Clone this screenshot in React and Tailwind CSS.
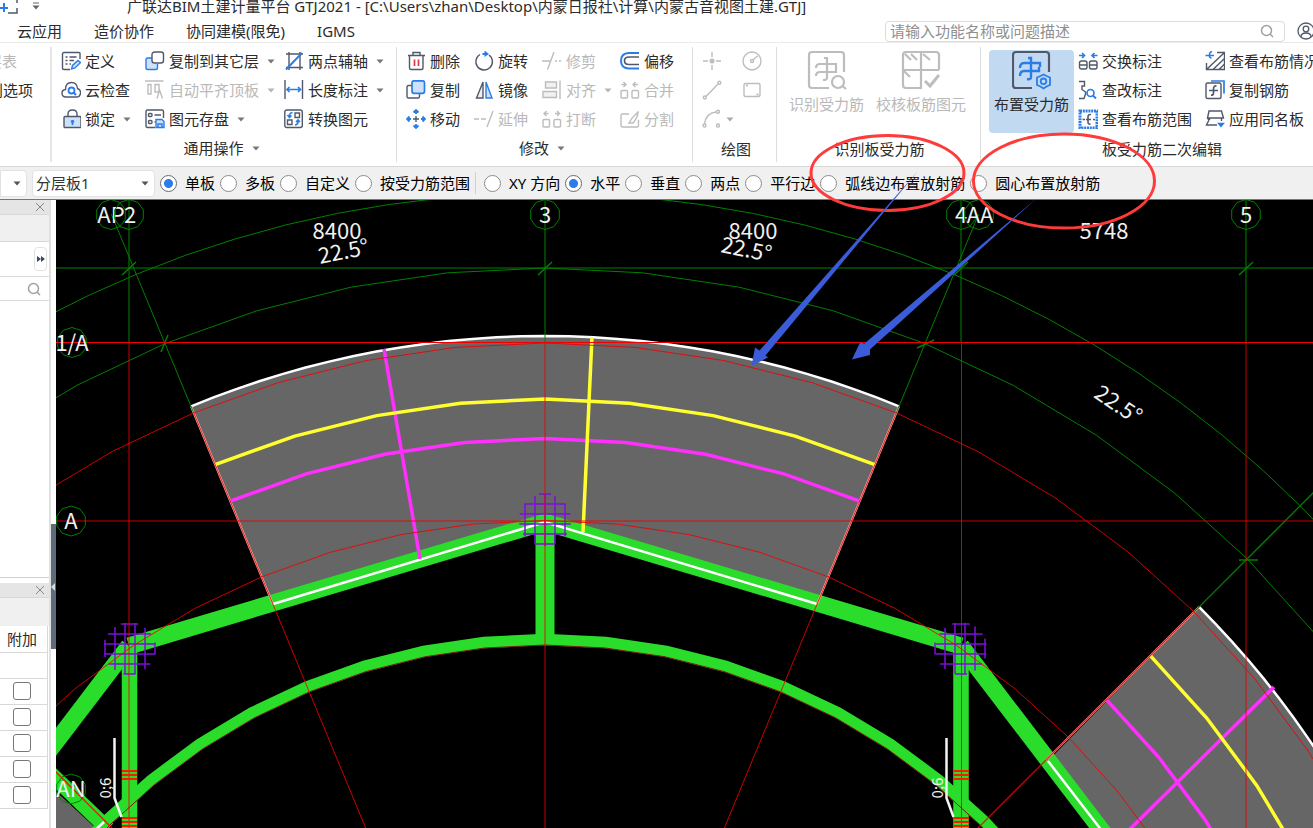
import React, { useState } from "react";

const DARK = "#50586a";
const BLUE = "#2a7de8";
const PALE = "#cfe1f8";
const GREY = "#bdbdbd";

function Svg({ children, color = DARK }) {
  return (
    <svg viewBox="0 0 20 20" className="size-5 shrink-0" fill="none" stroke={color} strokeWidth="1.4" aria-hidden="true">
      {children}
    </svg>
  );
}

const icons = {
  define: (
    <Svg>
      <path d="M19 8V2.5Q19 1.5 18 1.5H3Q1.5 1.5 1.5 3V17Q1.5 18.5 3 18.5H9" />
      <path d="M4.5 6H6.500M8.500 6H15.500M4.500 9.500H6.500M8.500 9.500H13M4.500 13H6.500M8.500 13H10" />
      <path d="M10.500 18L11.500 14.500L17 9.500L19.500 11.500L14 17Z" stroke={BLUE} fill={PALE} />
    </Svg>
  ),
  cloud: (
    <Svg>
      <path d="M5 17Q1 17 1 13Q1 10 4.500 9.500Q4.500 2.500 10.500 2.500Q16 2.500 16.500 8.500Q20 10 19.500 13Q19 17 15.500 17Z" />
      <circle cx="10.500" cy="10.500" r="3" stroke={BLUE} strokeWidth="1.800" />
      <path d="M12.800 12.800L15 15" stroke={BLUE} strokeWidth="2" />
    </Svg>
  ),
  lock: (
    <Svg>
      <path d="M7 8V5Q7 1 11.500 1Q16 1 16 5V8" />
      <rect x="3" y="7.500" width="17" height="11" rx="1" fill={PALE} />
      <path d="M11.500 11V16M9.800 12.500H13.200" stroke={BLUE} strokeWidth="1.800" />
    </Svg>
  ),
  copyFloor: (
    <Svg>
      <path d="M7 7H2.500Q1 7 1 8.500V17Q1 18.500 2.500 18.500H11Q12.500 18.500 12.500 17V13" fill={PALE} stroke={BLUE} />
      <rect x="7" y="1" width="11.500" height="11" rx="2.500" fill="white" />
    </Svg>
  ),
  alignTop: (
    <Svg color={GREY}>
      <path d="M0 1H18.500M3 4.500H6V14H3ZM10 4.500H14V12H10ZM12 18.500L14.500 10L17.500 18.500" />
    </Svg>
  ),
  store: (
    <Svg>
      <path d="M10 18.500H2.500Q1 18.500 1 17V2.500Q1 1 2.500 1H17Q18.500 1 18.500 2.500V9" />
      <rect x="3.500" y="4.500" width="3.500" height="3" rx="1" />
      <rect x="3.500" y="11.500" width="3.500" height="3" rx="1" />
      <path d="M9.500 6H16M9.500 13H10.500" />
      <path d="M11 10.500H17L19 12.500V18.500H11ZM13 18V15H17V18" stroke={BLUE} fill={PALE} />
    </Svg>
  ),
  axis: (
    <Svg>
      <path d="M5 1V19M16 1V19M2 3H19M2 16.500H19" />
      <path d="M2 18.500L18 2" stroke={BLUE} strokeWidth="2" />
    </Svg>
  ),
  length: (
    <Svg>
      <path d="M1 0V19M18.500 0V19" />
      <path d="M3 9.500H16.500M5.500 7L3 9.500L5.500 12M14 7L16.500 9.500L14 12" stroke={BLUE} strokeWidth="1.700" />
    </Svg>
  ),
  convert: (
    <Svg>
      <rect x="0.800" y="1" width="17.500" height="17.500" rx="2" />
      <path d="M11 4H15.500V8.500H11ZM3.500 11H8V15.500H3.500Z" />
      <path d="M8.500 3.500Q5 4 5.500 8M3.500 6L5.500 8.500L7.500 6.500M11 16Q14.500 15.500 14 11.500M12 13L14 11L16 13" stroke={BLUE} strokeWidth="1.600" />
    </Svg>
  ),
  trash: (
    <Svg>
      <path d="M2 4.500H19M7 4V1.500H14V4M3.500 5V17Q3.500 18.500 5 18.500H15.500Q17 18.500 17 17V5" />
      <path d="M8.500 8.500V15M12.500 8.500V15" stroke="#e0383e" strokeWidth="1.700" />
    </Svg>
  ),
  copy: (
    <Svg>
      <path d="M6 5.500H2.500Q1 5.500 1 7V16.500Q1 18 2.500 18H12Q13.500 18 13.500 16.500V14" />
      <rect x="6" y="0.800" width="12.500" height="12.500" rx="2" fill={PALE} stroke={BLUE} strokeWidth="1.700" />
    </Svg>
  ),
  move: (
    <Svg color={BLUE}>
      <path d="M10 1V5M10 15V19M1 10H5M15 10H19M7.500 3.500L10 1L12.500 3.500M7.500 16.500L10 19L12.500 16.500M3.500 7.500L1 10L3.500 12.500M16.500 7.500L19 10L16.500 12.500" strokeWidth="1.800" />
      <path d="M10 7V13M7 10H13" stroke={DARK} />
    </Svg>
  ),
  rotate: (
    <Svg>
      <path d="M6 3.500A8.300 8.300 0 1 0 15 4" />
      <path d="M8.500 3H13" stroke={BLUE} strokeWidth="2" />
      <path d="M10.500 -0.500L15 3L10.500 6Z" fill={BLUE} stroke="none" />
    </Svg>
  ),
  mirror: (
    <Svg>
      <path d="M9 2V18H2.500Z" fill="#eef0f3" />
      <path d="M12 2V18H18Z" stroke={BLUE} fill={PALE} />
    </Svg>
  ),
  extend: (
    <Svg color={GREY}>
      <path d="M0 10H5M7 10H12M13 18L19 2" />
    </Svg>
  ),
  trim: (
    <Svg color={GREY}>
      <path d="M0 10H9M5.500 18.500L12 1M13 10H15M17 10H19" />
    </Svg>
  ),
  align: (
    <Svg color={GREY}>
      <path d="M18 0.500V19M3.500 2H14.500V8H3.500ZM1 11.500H14.500V17.500H1Z" fill="#f1f1f1" />
    </Svg>
  ),
  breakUp: (
    <Svg color={GREY}>
      <rect x="1" y="10.500" width="6.500" height="7.500" rx="1" />
      <rect x="12" y="10.500" width="6.500" height="7.500" rx="1" />
      <path d="M2 4.500H6.500M4.500 2L2 4.500L4.500 7M13 4.500H17.500M15 2L17.500 4.500L15 7" />
    </Svg>
  ),
  offset: (
    <Svg>
      <path d="M19 2H8.500Q1 2.500 1 9.800Q1 17 8.500 17.500H19" stroke={BLUE} strokeWidth="2" />
      <path d="M19 6H9Q4.500 6 4.500 9.800Q4.500 13.500 9 13.500H19" strokeWidth="1.700" />
    </Svg>
  ),
  merge: (
    <Svg color={GREY}>
      <rect x="1" y="10.500" width="6.500" height="7.500" rx="1" />
      <rect x="12" y="10.500" width="6.500" height="7.500" rx="1" />
      <path d="M1.500 4.500H6M3.500 2L6 4.500L3.500 7M13 4.500H18M15.500 2L13 4.500L15.500 7" />
    </Svg>
  ),
  split: (
    <Svg color={GREY}>
      <path d="M9 5H2.500Q1 5 1 6.500V16.500Q1 18 2.500 18H17Q18.500 18 18.500 16.500V11M9 14Q12 8 18 3Q18 8 13 14Z" />
    </Svg>
  ),
  point: (
    <Svg color={GREY}>
      <path d="M10 1V6M10 14V19M1 10H6M14 10H19" />
      <circle cx="10" cy="10" r="2.500" fill={GREY} stroke="none" />
    </Svg>
  ),
  circle: (
    <Svg color={GREY}>
      <circle cx="10" cy="10" r="9" />
      <circle cx="10" cy="10" r="1.500" />
      <path d="M11 9L15.500 5" />
    </Svg>
  ),
  line: (
    <Svg color={GREY}>
      <path d="M4 16.500L16 4" />
      <circle cx="2.800" cy="17.500" r="1.500" />
      <circle cx="17.300" cy="2.800" r="1.500" />
    </Svg>
  ),
  rect: (
    <Svg color={GREY}>
      <rect x="2" y="3.500" width="16" height="13" rx="1.500" />
      <path d="M4 5.500H6M14.500 14.500H16.500" strokeWidth="2" />
    </Svg>
  ),
  arc: (
    <Svg color={GREY}>
      <path d="M2.500 15Q4 4 14 3" />
      <circle cx="2.500" cy="16.500" r="1.500" />
      <circle cx="16" cy="2.800" r="1.500" />
      <circle cx="16" cy="16.500" r="1.500" />
    </Svg>
  ),
  swapMark: (
    <Svg>
      <rect x="1.500" y="10" width="7.500" height="8" rx="2" />
      <rect x="11.500" y="10" width="7.500" height="8" rx="2" />
      <path d="M1.500 14H9M11.500 14H19" />
      <path d="M1 4.500H6.500M4 2L6.500 4.500L4 7M14 4.500H19.500M16.500 2L14 4.500L16.500 7" stroke={BLUE} strokeWidth="1.700" />
    </Svg>
  ),
  editMark: (
    <Svg>
      <path d="M1 1.500H6.500V6L4 6V9.500L7.500 12V14L6 18.500H1M1 18.500H4" />
      <circle cx="12.500" cy="13" r="3.500" stroke={BLUE} strokeWidth="1.700" />
      <path d="M15 15.500L18 18.500" stroke={BLUE} strokeWidth="1.800" />
    </Svg>
  ),
  range: (
    <Svg color={BLUE}>
      <rect x="2" y="2" width="17" height="17" strokeWidth="3" strokeDasharray="2 0.800" />
      <path d="M13 5.500Q10 5 10 8V13Q10 15.500 12.500 15" stroke={DARK} strokeWidth="1.600" />
      <path d="M4.500 10.500H7M8 10.500H13M15 10.500H17" stroke={DARK} />
    </Svg>
  ),
  barState: (
    <Svg>
      <path d="M12 1.500H19.500V18.500H1.500V12M1.500 18.500L19.500 1.500M8 18.500L19.500 7.500M14 18.500L19.500 13" />
      <path d="M7 0.500Q4 1 4.500 5Q4.500 7 6.500 7M0.500 4.500H9" stroke={BLUE} strokeWidth="1.600" />
    </Svg>
  ),
  copyBar: (
    <Svg>
      <path d="M6 1H19V13.500" stroke={BLUE} strokeWidth="1.700" />
      <rect x="1" y="3" width="15" height="15.500" rx="1.500" />
      <path d="M11.500 6Q8.500 5.500 8.500 9V13Q8.500 15.500 6 15M4 10.500H13" strokeWidth="1.700" />
    </Svg>
  ),
  sameName: (
    <Svg>
      <path d="M4 2H16.500L18.500 9H2.500ZM2.500 9L4 11M4 11L1.500 16H12M4.500 9V11M16.500 9V12" />
      <path d="M13.500 14.500H18.500L16 17.500Z" stroke={BLUE} fill={BLUE} />
    </Svg>
  ),
};

function Caret({ className = "text-[#777]" }) {
  return (
    <svg viewBox="0 0 8 5" className={`w-2 shrink-0 ${className}`} aria-hidden="true">
      <path d="M0.500 0.500H7.500L4 4.500Z" fill="currentColor" />
    </svg>
  );
}

function Tool({ icon, label, disabled, caret }) {
  return (
    <button
      type="button"
      disabled={disabled}
      className="flex h-7 items-center gap-1 whitespace-nowrap text-[#2b2b2b] disabled:text-[#b9b9b9]"
    >
      {icons[icon]}
      <span>{label}</span>
      {caret && <Caret className={disabled ? "ml-1 text-[#b5b5b5]" : "ml-1 text-[#777]"} />}
    </button>
  );
}

function GroupLabel({ children, caret }) {
  if (caret) {
    return (
      <div className="mt-px flex h-7 items-center justify-center gap-2 pr-3.5 whitespace-nowrap">
        <span>{children}</span>
        <Caret />
      </div>
    );
  }
  return <div className="mt-1 flex h-6 items-center justify-center pr-1.5 whitespace-nowrap">{children}</div>;
}

const generalTools = [
  { icon: "define", label: "定义" },
  { icon: "copyFloor", label: "复制到其它层", caret: true },
  { icon: "axis", label: "两点辅轴", caret: true },
  { icon: "cloud", label: "云检查" },
  { icon: "alignTop", label: "自动平齐顶板", caret: true, disabled: true },
  { icon: "length", label: "长度标注", caret: true },
  { icon: "lock", label: "锁定", caret: true },
  { icon: "store", label: "图元存盘", caret: true },
  { icon: "convert", label: "转换图元" },
];

const modifyTools = [
  { icon: "trash", label: "删除" },
  { icon: "rotate", label: "旋转" },
  { icon: "trim", label: "修剪", disabled: true },
  { icon: "offset", label: "偏移" },
  { icon: "copy", label: "复制" },
  { icon: "mirror", label: "镜像" },
  { icon: "align", label: "对齐", disabled: true, caret: true },
  { icon: "merge", label: "合并", disabled: true },
  { icon: "move", label: "移动" },
  { icon: "extend", label: "延伸", disabled: true },
  { icon: "breakUp", label: "打断", disabled: true },
  { icon: "split", label: "分割", disabled: true },
];

const editTools = [
  { icon: "swapMark", label: "交换标注" },
  { icon: "barState", label: "查看布筋情况" },
  { icon: "editMark", label: "查改标注" },
  { icon: "copyBar", label: "复制钢筋" },
  { icon: "range", label: "查看布筋范围" },
  { icon: "sameName", label: "应用同名板" },
];

function TopBar() {
  return (
    <header>
      <div className="flex h-3 items-center leading-5">
        <div className="flex w-[127px] shrink-0 items-center">
          <svg viewBox="0 0 20 20" className="size-5 shrink-0" fill="none" stroke={DARK} strokeWidth="1.500" aria-hidden="true">
            <path d="M10 2H17V7M17 12V17H8" />
            <path d="M4 7V16M0 12H8" stroke={BLUE} strokeWidth="2" />
          </svg>
          <svg viewBox="0 0 8 8" className="ml-3 w-2 shrink-0" aria-hidden="true">
            <path d="M1 1H7" stroke="#666" />
            <path d="M0.500 3.500H7.500L4 7.500Z" fill="#666" />
          </svg>
        </div>
        <h1 className="whitespace-nowrap">
          {"广联达BIM土建计量平台 GTJ2021 - [C:\\Users\\zhan\\Desktop\\内蒙日报社\\计算\\内蒙古音视图土建.GTJ]"}
        </h1>
      </div>
      <div className="flex h-[30px] items-center pt-2">
        <nav className="flex gap-8 pl-[17px] whitespace-nowrap">
          <a href="#cloud">云应用</a>
          <a href="#cost">造价协作</a>
          <a href="#model">协同建模(限免)</a>
          <a href="#igms">IGMS</a>
        </nav>
        <div className="ml-auto flex h-[21px] w-[400px] items-center rounded-sm border border-[#dcdcdc] pr-2.5">
          <input
            aria-label="搜索功能"
            placeholder="请输入功能名称或问题描述"
            className="min-w-0 flex-1 pl-1 leading-5 outline-none placeholder:text-[#8f8f8f]"
          />
          <SearchIcon />
        </div>
        <button type="button" aria-label="账户" className="ml-3 w-4 shrink-0 overflow-hidden">
          <svg viewBox="0 0 18 18" className="size-[18px]" fill="none" stroke={DARK} strokeWidth="1.300">
            <circle cx="9" cy="9" r="8" />
            <circle cx="9" cy="7" r="2.800" />
            <path d="M4 15Q4 11 9 11Q14 11 14 15" />
          </svg>
        </button>
      </div>
    </header>
  );
}

function SearchIcon() {
  return (
    <svg viewBox="0 0 14 14" className="size-3.5 shrink-0" fill="none" stroke="#a0a0a0" strokeWidth="1.500" aria-hidden="true">
      <circle cx="6.500" cy="6.500" r="5" />
      <path d="M10 10L13 13" />
    </svg>
  );
}

function Ribbon() {
  return (
    <div className="flex overflow-hidden border-t border-[#ebebeb] py-1">
      <div className="flex w-[52px] shrink-0 flex-col gap-px border-r-2 border-[#e6e6e6] whitespace-nowrap">
        <button type="button" disabled className="flex h-7 w-[17px] items-center justify-end overflow-hidden text-[#b9b9b9]">
          <span>层表</span>
        </button>
        <button type="button" className="flex h-7 w-[33px] items-center justify-end overflow-hidden">
          <span>别选项</span>
        </button>
      </div>

      <div className="w-[345px] shrink-0 border-r border-[#dedede] pl-[9px]">
        <div className="grid grid-cols-[84px_139px_auto] gap-y-px">
          {generalTools.map((t) => <Tool key={t.label} {...t} />)}
        </div>
        <GroupLabel caret>通用操作</GroupLabel>
      </div>

      <div className="w-[296px] shrink-0 border-r border-[#dedede] pl-[9px]">
        <div className="grid grid-cols-[68px_68px_78px_auto] gap-y-px">
          {modifyTools.map((t) => <Tool key={t.label} {...t} />)}
        </div>
        <GroupLabel caret>修改</GroupLabel>
      </div>

      <div className="w-[84px] shrink-0 border-r border-[#dedede] pl-[9px]">
        <div className="grid grid-cols-[40px_auto] gap-y-px">
          {["point", "circle", "line", "rect", "arc"].map((name) => (
            <button key={name} type="button" disabled aria-label={name} className="flex h-7 items-center gap-1">
              {icons[name]}
              {name === "arc" && <Caret className="text-[#aaa]" />}
            </button>
          ))}
        </div>
        <GroupLabel>绘图</GroupLabel>
      </div>

      <div className="w-[204px] shrink-0 border-r border-[#dedede] pl-2">
        <div className="flex h-[86px] gap-3 pt-[3px] pl-1">
          <button type="button" disabled className="flex flex-col items-center gap-1 text-[#b9b9b9]">
            <svg viewBox="0 0 40 40" className="size-10" fill="none" stroke={GREY} strokeWidth="2.200" aria-hidden="true">
              <path d="M37 22V5Q37 2 34 2H5Q2 2 2 5V35Q2 38 5 38H22" />
              <path d="M17 8H20V28Q20 30 16 30M9 18Q9 14 13 14H29V18M9 26Q9 22 13 22H29V18" />
              <circle cx="31" cy="32" r="6" fill="white" />
              <path d="M35.500 36L39 39" />
            </svg>
            <span>识别受力筋</span>
          </button>
          <button type="button" disabled className="flex flex-col items-center gap-1 text-[#b9b9b9]">
            <svg viewBox="0 0 40 40" className="size-10" fill="none" stroke={GREY} strokeWidth="2.200" aria-hidden="true">
              <path d="M38 20V5Q38 2 35 2H5Q2 2 2 5V35Q2 38 5 38H20V2M2 20H38M4 4L10 10M10 4L16 10M22 4L29 10M3 21L9 27" />
              <path d="M24 31L29 36L38 25" strokeWidth="3" />
            </svg>
            <span>校核板筋图元</span>
          </button>
        </div>
        <GroupLabel>识别板受力筋</GroupLabel>
      </div>

      <div className="w-[360px] shrink-0 pl-2">
        <div className="flex h-[86px] gap-1">
          <button type="button" className="mt-[3px] flex h-[83px] w-[85px] flex-col items-center gap-1 rounded bg-[#c2d9f2]">
            <svg viewBox="0 0 40 40" className="size-10" fill="none" stroke={DARK} strokeWidth="2.200" aria-hidden="true">
              <path d="M37 22V5Q37 2 34 2H4Q1 2 1 5V35Q1 38 4 38H20" />
              <path d="M16 8H19V27Q19 30 15 29M8 18Q8 13 12 13H28V17M8 26Q8 21 12 21H27V17" stroke={BLUE} strokeWidth="2.400" />
              <path d="M28.500 26L31.500 24.500L34.500 26L38 27.500V31V35L34.500 36.500L31.500 38.500L28.500 36.500L25 35V31V27.500Z" stroke={BLUE} strokeWidth="1.800" />
              <circle cx="31.500" cy="31.300" r="2.800" stroke={BLUE} strokeWidth="1.800" />
            </svg>
            <span>布置受力筋</span>
          </button>
          <div className="grid grid-cols-[127px_auto] gap-y-px">
            {editTools.map((t) => <Tool key={t.label} {...t} />)}
          </div>
        </div>
        <GroupLabel>板受力筋二次编辑</GroupLabel>
      </div>
    </div>
  );
}

function OptionRadio({ name, label, checked, onChange }) {
  return (
    <label className="mr-[5px] flex items-center gap-2">
      <input
        type="radio"
        name={name}
        checked={checked}
        onChange={onChange}
        className="size-[17px] appearance-none rounded-full border border-[#8c8c8c] bg-white checked:border-[#6b6b6b] checked:bg-[radial-gradient(circle,#2a7de8_0_4px,#fff_5px)]"
      />
      <span>{label}</span>
    </label>
  );
}

const scopes = ["单板", "多板", "自定义", "按受力筋范围"];
const directions = ["XY 方向", "水平", "垂直", "两点", "平行边", "弧线边布置放射筋", "圆心布置放射筋"];

function OptionsBar() {
  const [scope, setScope] = useState("单板");
  const [direction, setDirection] = useState("水平");

  return (
    <div className="flex h-[33px] items-center overflow-hidden border-t border-[#d8d8d8] bg-[#f0f0f0] whitespace-nowrap text-black">
      <div className="relative mr-[5px] flex items-center">
        <select aria-label="楼层" className="h-[27px] w-[27px] appearance-none rounded-r border border-[#e2e2e2] bg-white" />
        <Caret className="pointer-events-none absolute right-1.5 text-[#555]" />
      </div>
      <div className="relative mr-[5px] flex items-center">
        <select aria-label="分层" className="h-[27px] w-[123px] appearance-none rounded border border-[#e2e2e2] bg-white pl-[3px] text-[#333]">
          <option>分层板1</option>
        </select>
        <Caret className="pointer-events-none absolute right-1.5 text-[#555]" />
      </div>
      {scopes.map((s) => (
        <OptionRadio key={s} name="scope" label={s} checked={scope === s} onChange={() => setScope(s)} />
      ))}
      <div className="mr-2 h-[22px] w-px bg-[#d0d0d0]" />
      {directions.map((d) => (
        <OptionRadio key={d} name="direction" label={d} checked={direction === d} onChange={() => setDirection(d)} />
      ))}
    </div>
  );
}

function PanelHead() {
  return (
    <div className="flex h-[15px] items-center justify-end border-b border-[#d8d8d8] bg-[#e5e5e5] pr-1">
      <button type="button" aria-label="关闭">
        <svg viewBox="0 0 10 10" className="size-2.5" stroke="#888" aria-hidden="true">
          <path d="M1 1L9 9M9 1L1 9" />
        </svg>
      </button>
    </div>
  );
}

function SidePanel() {
  return (
    <aside className="flex w-[51px] shrink-0 flex-col border-r-2 border-[#e0e0e0] bg-white">
      <PanelHead />
      <div className="h-[27px] border-b border-[#d8d8d8] bg-[#f0f0f0]" />
      <div className="flex h-[35px] items-center justify-end border-b border-[#dcdcdc] pr-0.5">
        <button type="button" aria-label="展开" className="flex h-6 w-[13px] items-center justify-center rounded border border-[#e2e2e2]">
          <svg viewBox="0 0 8 6" className="w-2" fill="#3d4a60" aria-hidden="true">
            <path d="M0 0L4 3L0 6ZM4 0L8 3L4 6Z" />
          </svg>
        </button>
      </div>
      <div className="flex h-6 items-center justify-end border-b border-[#dcdcdc] pr-2">
        <SearchIcon />
      </div>
      <div className="h-[277px] border-b border-[#d0d0d0]" />
      <div className="mt-[5px]">
        <PanelHead />
        <div className="h-7 bg-[#f0f0f0]" />
      </div>
      <table className="w-[48px] border-collapse border-r border-[#d8d8d8]">
        <thead>
          <tr className="h-[26px] border-b border-[#d8d8d8]">
            <th className="p-0 pr-2.5 text-right font-normal whitespace-nowrap" scope="col">附加</th>
          </tr>
        </thead>
        <tbody>
          <tr className="h-[26px] border-b border-[#d8d8d8]"><td /></tr>
          {[1, 2, 3, 4, 5].map((n) => (
            <tr key={n} className="h-[26px] border-b border-[#d8d8d8]">
              <td className="p-0 pr-1 align-middle">
                <input
                  type="checkbox"
                  aria-label={`附加 ${n}`}
                  className="mx-auto block size-[18px] appearance-none rounded-[3px] border border-[#777] bg-white"
                />
              </td>
            </tr>
          ))}
        </tbody>
      </table>
    </aside>
  );
}

// ---- drawing ----
const CX = 545;
const CY = 1261;
const STEP = 5.625;

const polar = (r, deg) => {
  const a = (deg * Math.PI) / 180;
  return [CX + r * Math.sin(a), CY - r * Math.cos(a)];
};

// polyline along a circle around the centre of the axis grid
const arc = (r, from, to, step = STEP) => {
  const pts = [];
  for (let d = from; d < to + 0.001; d += step) pts.push(polar(r, d).map((v) => v.toFixed(1)).join(","));
  return pts.join(" ");
};

function Radial({ deg, r1, r2, ...rest }) {
  const [x1, y1] = polar(r1, deg);
  const [x2, y2] = polar(r2, deg);
  return <line x1={x1} y1={y1} x2={x2} y2={y2} {...rest} />;
}

function Bubble({ x, y = 214.5, tx = x, label }) {
  const pts = [];
  for (let i = 0; i < 10; i++) {
    const a = (i * Math.PI) / 5;
    pts.push(`${x + 15 * Math.sin(a)},${y - 15 * Math.cos(a)}`);
  }
  return (
    <g>
      <polygon points={pts.join(" ")} fill="none" stroke="#008000" />
      <text x={tx} y={y + 8} textAnchor="middle" fill="#f0f0f0">{label}</text>
    </g>
  );
}

function Hatch({ cx, cy, xs, ys, r = 26 }) {
  const half = (d) => Math.sqrt(Math.max(r * r - d * d, 36));
  return (
    <g stroke="#7a10d8" strokeWidth="1.500">
      {xs.map((x) => <line key={`x${x}`} x1={x} x2={x} y1={cy - half(x - cx)} y2={cy + half(x - cx)} />)}
      {ys.map((y) => <line key={`y${y}`} y1={y} y2={y} x1={cx - half(y - cy)} x2={cx + half(y - cy)} />)}
    </g>
  );
}

function Stirrup({ x }) {
  const rows = [771, 775, 779, 818, 822, 826];
  return (
    <g>
      {rows.map((y) => <line key={y} x1={x - 7} x2={x + 8} y1={y} y2={y} stroke="#ff1800" strokeWidth="2" />)}
      <path d={`M${x - 14.5} 738V798L${x - 7.5} 817`} fill="none" stroke="#f4f4f4" strokeWidth="2.500" />
      <text transform={`translate(${x - 18} 788) rotate(-90)`} textAnchor="middle" fontSize="15" fill="#f0f0f0">0;6</text>
    </g>
  );
}

function Drawing() {
  const hatchYs = [624, 634, 644, 654, 664, 674];
  return (
    <main className="relative min-w-0 flex-1 overflow-hidden bg-black">
      <svg className="absolute inset-0 h-full w-full font-['Noto_Sans_CJK_SC',sans-serif] text-[22px]">
        <g transform="translate(-56 -200)" fill="none">
          {/* slabs */}
          <polygon points={`${arc(925, -22.5, 22.5, 1.5)} 817,604 545,522 273,604`} fill="#666" />
          <polygon points={`${arc(925, 45, 75, 1.5)} 1313,1090 1048,761`} fill="#666" />
          <polygon points="50,786 100,832 50,832" fill="#666" />

          {/* beams */}
          <g stroke="#2bdd2b">
            <polyline points="-19,840 129,646" strokeWidth="17" />
            <polyline points="129,646 545,522 961,646" strokeWidth="17" />
            <polyline points="961,646 1109,840" strokeWidth="17" />
            <path d="M545 520V640" strokeWidth="19" />
            <path d="M129.500 646V840M961 646V840" strokeWidth="15.500" />
            <polyline points={arc(621.5, -50.625, 50.625)} strokeWidth="11.500" />
            <path d="M50 773L108 829" strokeWidth="15" />
          </g>
          <polyline points={arc(616, -50.625, 50.625)} stroke="#7a1800" />

          {/* slab outlines */}
          <g stroke="#fff" strokeWidth="2.500">
            <polyline points={arc(925, -22.5, 22.5, 1.5)} />
            <polyline points={arc(925, 45, 75, 1.5)} />
            <path d="M273 604L545 522L817 604M1048 761L1109 840M94 831L104 822" />
          </g>
          <g stroke="#ffb0a8" strokeWidth="2">
            <Radial deg={-22.5} r1={711} r2={925} />
            <Radial deg={22.5} r1={711} r2={925} />
            <Radial deg={45} r1={708} r2={925} />
          </g>

          {/* bars */}
          <g strokeWidth="3.500">
            <g stroke="#ff30ff">
              <polyline points={arc(822.5, -22.5, 22.5)} />
              <path d="M384 349L420 559M1126 833L1274 687" />
              <polyline points={arc(794, 45, 73.125)} />
            </g>
            <g stroke="#ffff30">
              <polyline points={arc(862, -22.5, 22.5)} />
              <path d="M592 337L583 532" />
              <polyline points={arc(856, 45, 73.125)} />
            </g>
          </g>

          <Hatch cx={545} cy={520} xs={[525, 535, 545, 555, 565]} ys={[494, 504, 514, 524, 534, 544]} />
          <Hatch cx={129.5} cy={648.5} xs={[105, 115, 125, 135, 145, 155]} ys={hatchYs} />
          <Hatch cx={961} cy={648.5} xs={[935, 945, 955, 965, 975, 985]} ys={hatchYs} />

          {/* axes, green outside and red inside */}
          <g stroke="#008000">
            <path d="M50 268H1400M129 199V343M545 199V343M961 199V343M1246 199V343" />
            <polyline points={arc(993, -45, 67.5)} />
            <polyline points={arc(1068, -45, 67.5, 2.8125)} />
            <Radial deg={-22.5} r1={918} r2={1133} />
            <Radial deg={22.5} r1={918} r2={1133} />
            <Radial deg={45} r1={918} r2={1133} strokeWidth="1.300" />
            <path d="M122 275L136 262M538 275L552 262M954 275L968 262M1239 275L1253 262" strokeWidth="1.500" />
            <path d="M161 352L168 335M917 348L934 340M1239 560H1258" strokeWidth="1.500" />
          </g>
          <g stroke="#f00000" strokeOpacity="0.85">
            <path d="M50 342.500H1400" strokeOpacity="1" />
            <path d="M50 521H1400M129 343V840M545 343V840M1246 343V840" />
            <path d="M961.500 343V840" />
            <polyline points={arc(918, -39.375, 67.5)} />
            <polyline points={arc(740.5, -45, 67.5)} />
            <Radial deg={-22.5} r1={400} r2={918} />
            <Radial deg={22.5} r1={400} r2={918} />
            <Radial deg={45} r1={500} r2={918} strokeWidth="1.300" />
            <Radial deg={-45} r1={600} r2={918} strokeWidth="1.300" />
          </g>

          <Stirrup x={129} />
          <Stirrup x={961} />

          <Bubble x={111} label="AP" />
          <Bubble x={129} label="2" tx={130} />
          <Bubble x={545} label="3" />
          <Bubble x={961} label="4" />
          <Bubble x={979} label="AA" tx={980} />
          <Bubble x={1246} label="5" />
          <Bubble x={72} y={342.5} label="1/A" />
          <Bubble x={71} y={521} label="A" />
          <Bubble x={71} y={789} label="AN" />

          <g fill="#f0f0f0" textAnchor="middle">
            <text x="337" y="239">8400</text>
            <text x="753" y="239">8400</text>
            <text x="1104" y="239">5748</text>
            <text transform="translate(345 259) rotate(-11.25)">22.5°</text>
            <text transform="translate(745 257) rotate(11.25)">22.5°</text>
            <text transform="translate(1114 411) rotate(33.75)">22.5°</text>
          </g>
        </g>
      </svg>
    </main>
  );
}

// red rings and arrows drawn over the whole window
function Markup() {
  return (
    <svg className="pointer-events-none absolute inset-0 h-full w-full" aria-hidden="true">
      <g fill="none" stroke="#ff3a3a" strokeWidth="3">
        <ellipse cx="887.500" cy="173" rx="76.500" ry="37.500" />
        <ellipse cx="1064" cy="181" rx="90.500" ry="47" />
      </g>
      <g fill="#3a5cd8">
        <polygon points="918,171 759.500,350.500 755,347.500 751.500,366 768,357.500 765.500,355.500" />
        <polygon points="1037,198 864.500,343.500 860,342.500 852,359.500 870,355 870,349.500" />
      </g>
    </svg>
  );
}

export default function App() {
  return (
    <div className="relative flex min-h-screen flex-col overflow-hidden bg-white font-['Noto_Sans','Noto_Sans_CJK_SC',sans-serif] text-[15px] leading-5 text-[#2b2b2b]">
      <TopBar />
      <Ribbon />
      <OptionsBar />
      <div className="flex flex-1 border-t border-[#777]">
        <SidePanel />
        <div className="w-[5px] shrink-0">
          <button type="button" aria-label="收起面板" className="mt-[324px] flex h-[125px] w-full items-center bg-[#5f6b7b]">
            <svg viewBox="0 0 4 8" className="w-1" fill="#d5dae2" aria-hidden="true">
              <path d="M4 0V8L0 4Z" />
            </svg>
          </button>
        </div>
        <Drawing />
      </div>
      <Markup />
    </div>
  );
}
